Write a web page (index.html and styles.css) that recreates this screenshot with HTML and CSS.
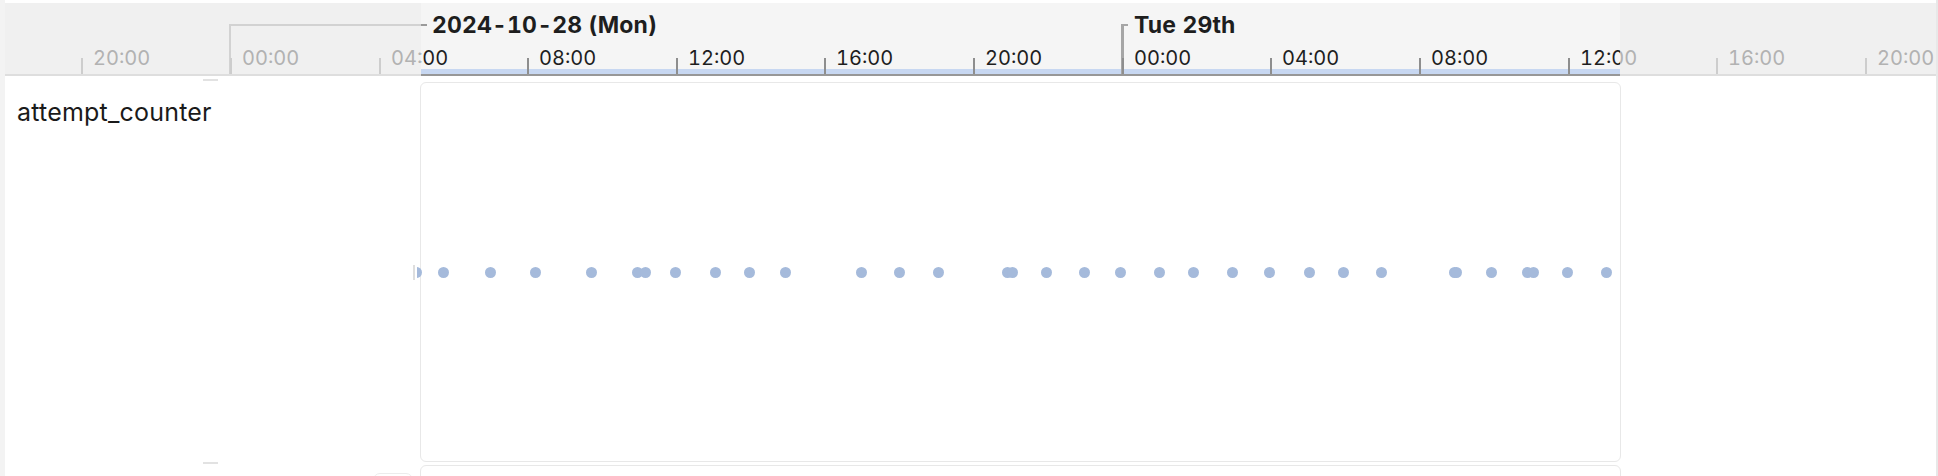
FILE: index.html
```html
<!DOCTYPE html>
<html lang="en">
<head>
<meta charset="utf-8">
<title>Timeline</title>
<link rel="stylesheet" href="styles.css">
</head>
<body>
<div class="app">
  <div class="gutter"></div>
  <div class="main">
    <div class="axis">
      <div class="layer base">
        <div class="day" style="left:224px"><i class="conn" style="width:198px"></i></div>
        <div class="day major" style="left:1116px"><i class="conn" style="width:7px"></i></div>
        <div class="tick" style="left:77px"><span>20:00</span></div>
        <div class="tick" style="left:226px"><span>00:00</span></div>
        <div class="tick" style="left:375px"><span>04:00</span></div>
        <div class="tick" style="left:523px"><span>08:00</span></div>
        <div class="tick" style="left:672px"><span>12:00</span></div>
        <div class="tick" style="left:820px"><span>16:00</span></div>
        <div class="tick" style="left:969px"><span>20:00</span></div>
        <div class="tick" style="left:1118px"><span>00:00</span></div>
        <div class="tick" style="left:1266px"><span>04:00</span></div>
        <div class="tick" style="left:1415px"><span>08:00</span></div>
        <div class="tick" style="left:1564px"><span>12:00</span></div>
        <div class="tick" style="left:1712px"><span>16:00</span></div>
        <div class="tick" style="left:1861px"><span>20:00</span></div>
      </div>
      <div class="range">
        <div class="layer active">
          <div class="day" style="left:224px"><i class="conn" style="width:198px"></i><b class="day-label" style="left:203px">2024-10-28 (Mon)</b></div>
          <div class="day major" style="left:1116px"><i class="conn" style="width:7px"></i><b class="day-label" style="left:13px">Tue 29th</b></div>
          <div class="tick" style="left:375px"><span>04:00</span></div>
          <div class="tick" style="left:523px"><span>08:00</span></div>
          <div class="tick" style="left:672px"><span>12:00</span></div>
          <div class="tick" style="left:820px"><span>16:00</span></div>
          <div class="tick" style="left:969px"><span>20:00</span></div>
          <div class="tick" style="left:1118px"><span>00:00</span></div>
          <div class="tick" style="left:1266px"><span>04:00</span></div>
          <div class="tick" style="left:1415px"><span>08:00</span></div>
          <div class="tick" style="left:1564px"><span>12:00</span></div>
        </div>
        <div class="range-bar"></div>
      </div>
    </div>

    <div class="row first">
      <div class="row-label">
        <span class="handle top"></span>
        <span class="name">attempt_counter</span>
        <span class="collapse-mark"></span>
        <span class="handle bottom"></span>
      </div>
      <div class="card">
        <div class="plot">
          <span class="dot" style="left:-1px"></span>
          <span class="dot" style="left:26px"></span>
          <span class="dot" style="left:73px"></span>
          <span class="dot" style="left:118px"></span>
          <span class="dot" style="left:174px"></span>
          <span class="dot" style="left:220px"></span>
          <span class="dot" style="left:228px"></span>
          <span class="dot" style="left:258px"></span>
          <span class="dot" style="left:298px"></span>
          <span class="dot" style="left:332px"></span>
          <span class="dot" style="left:368px"></span>
          <span class="dot" style="left:444px"></span>
          <span class="dot" style="left:482px"></span>
          <span class="dot" style="left:521px"></span>
          <span class="dot" style="left:590px"></span>
          <span class="dot" style="left:595px"></span>
          <span class="dot" style="left:629px"></span>
          <span class="dot" style="left:667px"></span>
          <span class="dot" style="left:703px"></span>
          <span class="dot" style="left:742px"></span>
          <span class="dot" style="left:776px"></span>
          <span class="dot" style="left:815px"></span>
          <span class="dot" style="left:852px"></span>
          <span class="dot" style="left:892px"></span>
          <span class="dot" style="left:926px"></span>
          <span class="dot" style="left:964px"></span>
          <span class="dot" style="left:1037px"></span>
          <span class="dot" style="left:1039px"></span>
          <span class="dot" style="left:1074px"></span>
          <span class="dot" style="left:1110px"></span>
          <span class="dot" style="left:1116px"></span>
          <span class="dot" style="left:1150px"></span>
          <span class="dot" style="left:1189px"></span>
        </div>
      </div>
    </div>

    <div class="row second">
      <div class="row-label">
        <span class="mini-box"></span>
      </div>
      <div class="card"></div>
    </div>
  </div>
  <div class="edge"></div>
</div>
</body>
</html>
```

FILE: styles.css
```css
* { box-sizing: border-box; }

html, body {
  margin: 0;
  padding: 0;
  background: #ffffff;
  font-family: "Inter", "Noto Sans", "Liberation Sans", sans-serif;
  color: #1c1c1c;
  overflow: hidden;
}

.app {
  display: flex;
  width: 1938px;
  height: 476px;
  overflow: hidden;
}

.gutter {
  width: 5px;
  flex: none;
  background: #f3f3f3;
}

.edge {
  width: 2px;
  flex: none;
  background: #e8e8e8;
}

.main {
  flex: 1;
  min-width: 0;
  padding-top: 3px;
  display: flex;
  flex-direction: column;
  background: #ffffff;
  overflow: hidden;
}

/* ---------- time axis ---------- */
.axis {
  position: relative;
  height: 73px;
  flex: none;
  background: #f0f0f0;
  border-bottom: 2px solid #dedede;
}

.layer {
  position: absolute;
  top: 0;
  left: 0;
  width: 1931px;
  height: 71px;
  --tick: #cdcdcd;
  --label: #b2b2b2;
  --day: #d2d2d2;
  --day-major: #d0d0d0;
}

.layer.active {
  left: -416px;
  z-index: 1;
  --tick: #8e8e8e;
  --label: #1e1e1e;
  --day: #9a9a9a;
  --day-major: #a6a6a6;
}

.range {
  position: absolute;
  top: 0;
  left: 416px;
  width: 1199px;
  height: 73px;
  overflow: hidden;
  background: #f5f5f5;
  border-bottom: 2px solid #979797;
}

.range-bar {
  position: absolute;
  left: 0;
  right: 0;
  bottom: 0;
  height: 5px;
  background: #c7d7f1;
}

.tick {
  position: absolute;
  top: 0;
  bottom: 0;
  width: 0;
}

.tick::before {
  content: "";
  position: absolute;
  left: -1px;
  bottom: 0;
  width: 1.5px;
  height: 16px;
  background: var(--tick);
}

.tick span {
  position: absolute;
  left: 11px;
  top: 45px;
  font-size: 20px;
  line-height: 20px;
  white-space: nowrap;
  color: var(--label);
  font-variant-numeric: tabular-nums;
}

.day {
  position: absolute;
  top: 21px;
  bottom: 0;
  width: 0;
}

.day::before {
  content: "";
  position: absolute;
  left: 0;
  top: 0;
  bottom: 0;
  width: 2px;
  background: var(--day);
}

.day.major::before {
  width: 3px;
  background: var(--day-major);
}

.conn {
  position: absolute;
  left: 0;
  top: 0;
  height: 2px;
  background: var(--day);
}

.day.major .conn { background: var(--day-major); }

.day-label {
  position: absolute;
  top: -10px;
  font-size: 23px;
  line-height: 23px;
  font-weight: 700;
  white-space: nowrap;
  letter-spacing: 0.15px;
  color: var(--label);
  font-variant-numeric: tabular-nums;
}

/* ---------- rows ---------- */
.row {
  display: grid;
  grid-template-columns: 415px 1201px;
  flex: none;
}

.row.first {
  height: 387px;
  padding-top: 6px;
}

.row.second {
  padding-top: 2px;
  height: 20px;
}

.row-label {
  position: relative;
  padding: 18px 0 0 12px;
}

.row.second .row-label { padding: 0; }

.name {
  display: block;
  font-size: 25px;
  line-height: 24px;
  color: #1a1a1a;
  letter-spacing: 0.2px;
}

.handle {
  position: absolute;
  left: 198px;
  width: 15px;
  height: 2px;
  background: #e2e2e2;
}

.handle.top { top: -3px; }
.handle.bottom { bottom: -1px; }

.collapse-mark {
  position: absolute;
  right: 5px;
  top: 183px;
  width: 2px;
  height: 15px;
  background: #dedede;
}

.mini-box {
  position: absolute;
  right: 7px;
  top: 8px;
  width: 40px;
  height: 20px;
  border: 1px solid #ececec;
  border-radius: 7px;
}

.card {
  position: relative;
  height: 380px;
  border: 1px solid #e8e8e8;
  border-radius: 6px;
  background: #ffffff;
}

.row.second .card { height: 40px; }

.plot {
  position: absolute;
  top: 0;
  bottom: 0;
  left: -4px;
  right: 0;
  overflow: hidden;
}

.dot {
  position: absolute;
  top: 50%;
  width: 11px;
  height: 11px;
  margin: -5.5px 0 0 -5.5px;
  border-radius: 50%;
  background: #a5badb;
}
```
